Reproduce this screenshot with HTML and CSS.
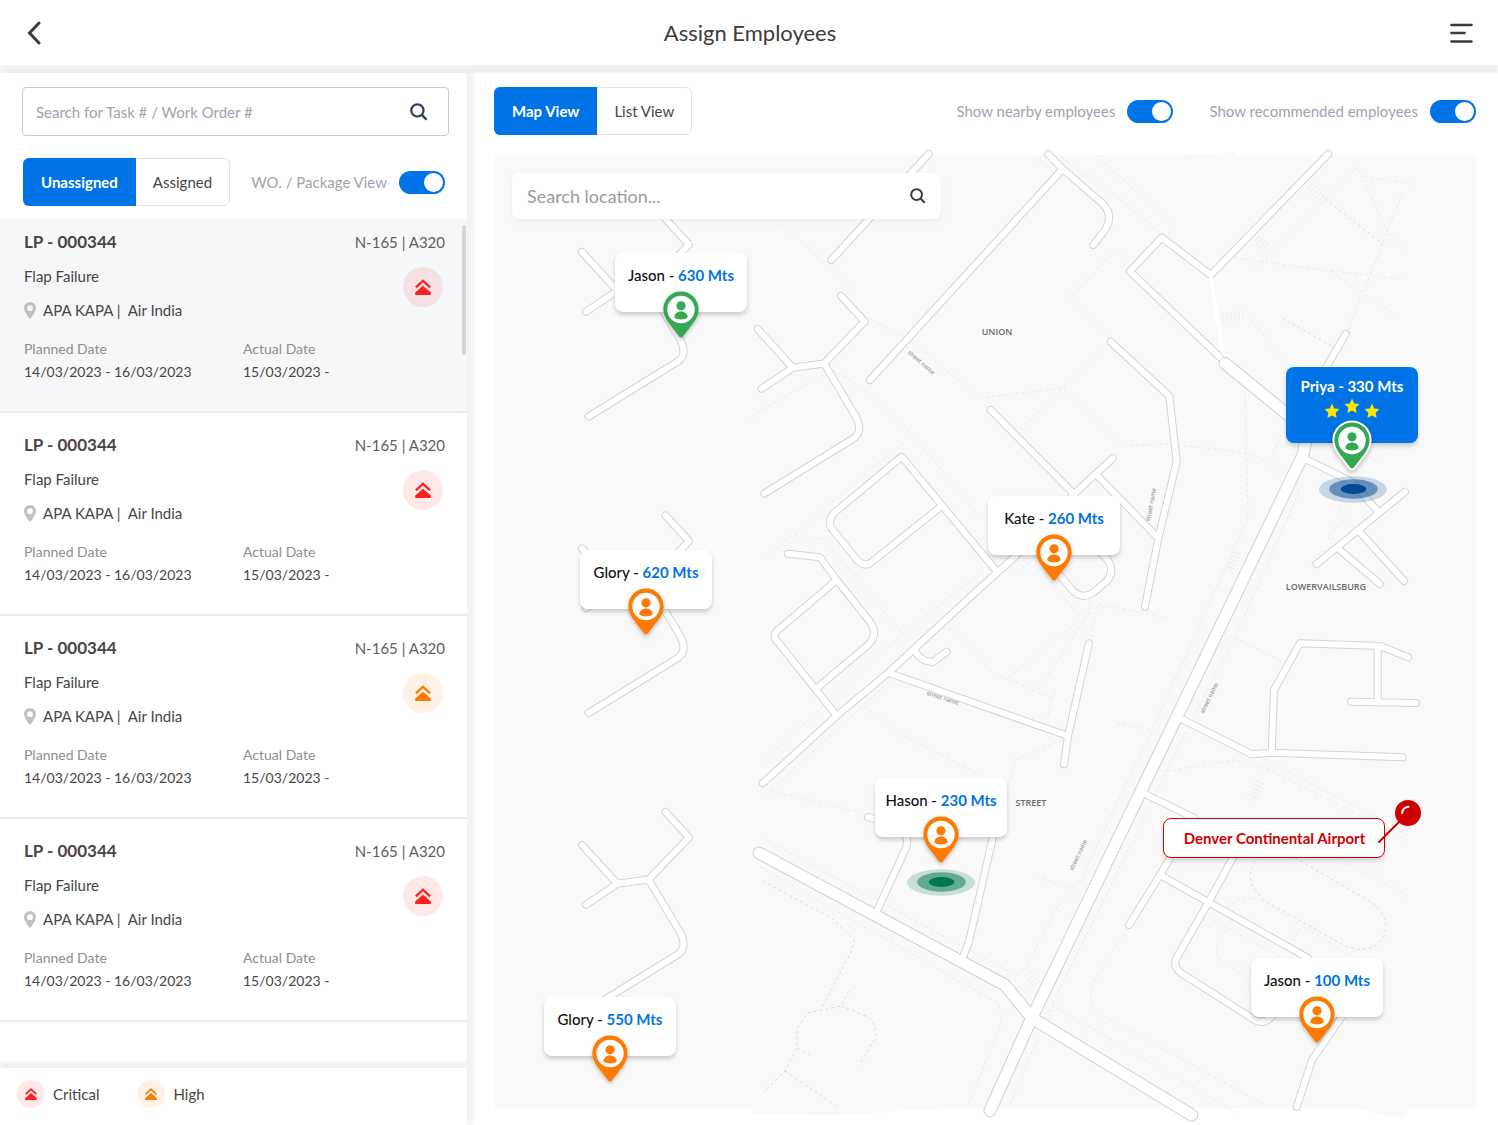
FILE: index.html
```html
<!DOCTYPE html>
<html lang="en">
<head>
<meta charset="utf-8">
<meta name="viewport" content="width=device-width, initial-scale=1">
<title>Assign Employees</title>
<link rel="stylesheet" href="styles.css">
</head>
<body>
<svg class="sprite" aria-hidden="true">
  <symbol id="i-search" viewBox="0 0 18 18"><circle cx="7.4" cy="7.4" r="6.1" fill="none" stroke="currentColor" stroke-width="2.2"/><path d="M11.8 11.8 16.6 16.6" stroke="currentColor" stroke-width="2.4" fill="none"/></symbol>
  <symbol id="i-priority" viewBox="0 0 16 16"><path d="M.9 8.3 8 1.7l7.1 6.6" fill="none" stroke="currentColor" stroke-width="2.3"/><path d="M8 6.8.2 13.6V16h15.6v-2.4z" fill="currentColor"/></symbol>
  <symbol id="i-place" viewBox="0 0 12 17"><path fill-rule="evenodd" fill="currentColor" d="M6 0a6 6 0 0 0-6 6c0 4.300 6 11 6 11s6-6.700 6-11a6 6 0 0 0-6-6zm0 3.300a2.900 2.900 0 1 1 0 5.800 2.900 2.900 0 0 1 0-5.800z"/></symbol>
  <symbol id="i-pin" viewBox="-2 -2 40 51"><path class="pin-body" d="M18 .5C8.300.5.4 8.300.4 18c0 4.500 1.700 8.700 4.600 13L16.200 45.500c1 1.300 2.600 1.300 3.600 0L31 31c2.900-4.300 4.600-8.500 4.600-13C35.600 8.300 27.700.5 18 .5z" fill="currentColor"/><circle cx="18" cy="18.500" r="13.700" fill="#fff"/><circle cx="18" cy="14.800" r="4.600" fill="currentColor"/><path d="M11.300 26.600c0-3.700 3-6 6.700-6s6.700 2.300 6.700 6c-1.600 1.200-3.800 1.900-6.700 1.900s-5.100-.7-6.700-1.900z" fill="currentColor"/></symbol>
  <symbol id="i-halo" viewBox="0 0 68 27"><ellipse cx="34" cy="13.500" rx="34" ry="13.200" fill="currentColor" opacity=".2"/><ellipse cx="34.500" cy="13" rx="24.300" ry="9.700" fill="currentColor" opacity=".5"/><ellipse cx="34.500" cy="13" rx="12.700" ry="5" fill="currentColor"/></symbol>
  <symbol id="i-star" viewBox="0 0 16 16"><path fill="#ffe600" d="M8 .6l2.200 4.900 5.300.6-3.900 3.600 1 5.300L8 12.400 3.400 15l1-5.300L.5 6.100l5.300-.6z"/></symbol>
</svg>

<header class="topbar">
  <button class="icon-btn" aria-label="Back"><svg width="14" height="24" viewBox="0 0 14 24"><path d="M12 2 2.500 12l9.500 10" fill="none" stroke="currentColor" stroke-width="3" stroke-linecap="round"/></svg></button>
  <h1>Assign Employees</h1>
  <button class="icon-btn" aria-label="Menu"><svg width="24" height="22" viewBox="0 0 24 22"><path d="M2.500 3h20M2.500 11h13M2.500 19.500h20" stroke="currentColor" stroke-width="2.600" stroke-linecap="round"/></svg></button>
</header>

<div class="layout">
  <aside class="sidebar">
    <div class="filters">
      <form class="search">
        <input type="search" aria-label="Search tasks" placeholder="Search for Task # / Work Order #">
        <button type="button" aria-label="Search"><svg width="18" height="18"><use href="#i-search"/></svg></button>
      </form>
      <div class="filter-row">
        <div class="segmented"><button class="active">Unassigned</button><button>Assigned</button></div>
        <label class="switch">WO. / Package View <input type="checkbox" checked></label>
      </div>
    </div>

    <ul class="tasks">
      <li class="task selected">
        <div class="task-head"><h2>LP - 000344</h2><span>N-165 | A320</span></div>
        <div class="task-body">
          <div class="task-info"><p>Flap Failure</p><p class="place"><svg width="12" height="17"><use href="#i-place"/></svg>APA KAPA |&nbsp; Air India</p></div>
          <span class="priority critical"><svg width="16" height="16"><use href="#i-priority"/></svg></span>
        </div>
        <dl class="dates"><div><dt>Planned Date</dt><dd>14/03/2023 - 16/03/2023</dd></div><div><dt>Actual Date</dt><dd>15/03/2023 -</dd></div></dl>
      </li>
      <li class="task">
        <div class="task-head"><h2>LP - 000344</h2><span>N-165 | A320</span></div>
        <div class="task-body">
          <div class="task-info"><p>Flap Failure</p><p class="place"><svg width="12" height="17"><use href="#i-place"/></svg>APA KAPA |&nbsp; Air India</p></div>
          <span class="priority critical"><svg width="16" height="16"><use href="#i-priority"/></svg></span>
        </div>
        <dl class="dates"><div><dt>Planned Date</dt><dd>14/03/2023 - 16/03/2023</dd></div><div><dt>Actual Date</dt><dd>15/03/2023 -</dd></div></dl>
      </li>
      <li class="task">
        <div class="task-head"><h2>LP - 000344</h2><span>N-165 | A320</span></div>
        <div class="task-body">
          <div class="task-info"><p>Flap Failure</p><p class="place"><svg width="12" height="17"><use href="#i-place"/></svg>APA KAPA |&nbsp; Air India</p></div>
          <span class="priority high"><svg width="16" height="16"><use href="#i-priority"/></svg></span>
        </div>
        <dl class="dates"><div><dt>Planned Date</dt><dd>14/03/2023 - 16/03/2023</dd></div><div><dt>Actual Date</dt><dd>15/03/2023 -</dd></div></dl>
      </li>
      <li class="task">
        <div class="task-head"><h2>LP - 000344</h2><span>N-165 | A320</span></div>
        <div class="task-body">
          <div class="task-info"><p>Flap Failure</p><p class="place"><svg width="12" height="17"><use href="#i-place"/></svg>APA KAPA |&nbsp; Air India</p></div>
          <span class="priority critical"><svg width="16" height="16"><use href="#i-priority"/></svg></span>
        </div>
        <dl class="dates"><div><dt>Planned Date</dt><dd>14/03/2023 - 16/03/2023</dd></div><div><dt>Actual Date</dt><dd>15/03/2023 -</dd></div></dl>
      </li>
    </ul>

    <footer class="legend">
      <span class="legend-item"><span class="priority small critical"><svg width="12" height="12"><use href="#i-priority"/></svg></span>Critical</span>
      <span class="legend-item"><span class="priority small high"><svg width="12" height="12"><use href="#i-priority"/></svg></span>High</span>
    </footer>
  </aside>

  <main class="content">
    <div class="toolbar">
      <div class="segmented"><button class="active">Map View</button><button>List View</button></div>
      <div class="switches">
        <label class="switch">Show nearby employees <input type="checkbox" checked></label>
        <label class="switch">Show recommended employees <input type="checkbox" checked></label>
      </div>
    </div>

    <div class="map">
      <svg class="streets" viewBox="494 155 982 953" aria-hidden="true">
        <defs>
          <path id="branch" d="M665.500 812 689 837.500 648.500 879.500 680.500 933C685 942 685 950 677 955L588.700 1009.500M648.500 879.500 617.300 883.700 582 845M617.300 883.700 586 904.700"/>
          <g id="minor">
            <use href="#branch"/><use href="#branch" y="-296.500"/><use href="#branch" y="-593"/><use href="#branch" x="175.600" y="-516"/>
            <path d="M928.700 154 831.300 260"/>
            <path d="M1048.300 154.300 1062.700 169 1103 204Q1114 216 1105 230L1093.300 245M1062.700 169 870 380"/>
            <path d="M1328.300 154 1210.700 275 1161.700 237.500 1130 271.300 1219.300 356.700"/>
            <path d="M1345.700 334 1300 412"/>
            <path d="M1110.700 341.700 1169.300 396 1176.700 461.700 1158.300 538.300 1145 606.700"/>
            <path d="M990.700 410 1073.300 493.300 1101 553Q1118 567 1107 581L1094 592Q1083 600 1073 591L1040 552"/>
            <path d="M1112.700 458.300 1073 495 1015 556.700 980 588 888 673 836.700 715.700 762.700 783.300M1096.700 475 1158.300 538.300"/>
            <path d="M941.700 506 873 561Q866 568 858 561L832 529Q827 521 834 513L901.700 456.700 997 571.700"/>
            <path d="M788 553.700 820 557.300 836.700 580 870 621.700Q879 634 868 645L816.700 688.300M836.700 580 778 630Q772 635 777 641L836.700 715.700"/>
            <path d="M915 651.700Q922 662 933 662L946.700 651.700"/>
            <path d="M890 673.300 1068 736M1089 643.300 1068 736 1064 764.300"/>
            <path d="M1303 458 1351.700 481.700 1376.700 510M1405 491.700 1316.700 564M1359 531 1404 581M1337.700 548.300 1380 584"/>
            <path d="M1180 718.300 1251.700 754.300 1271.700 752.700 1402.700 757.300M1271.700 752.700 1274 690 1300 643.300 1380 646 1408 657.300M1377.700 647V702M1351 701.700 1416 703"/>
            <path d="M1145 794 1194 818 1160 875 1129 925M1160 875 1308 958"/>
            <path d="M1236 852 1208 903 1176 959Q1173 967 1181 973L1250 1017Q1263 1027 1272 1016"/>
            <path d="M1345 1012 1312 1060 1296.700 1107"/>
            <path d="M868 817 900 826Q910 836 906 848L876 913"/>
            <path d="M961.700 960 969 941.700 995 828"/>
          </g>
          <g id="major">
            <path d="M1308 430 1303 455 1031.700 1018 990 1110.700"/>
            <path d="M1225 363.300 1310 433"/>
            <path d="M759 853 1005 985 1031.700 1018 1191.700 1115"/>
          </g>
        </defs>
        <path class="ground" d="M494 155H1180L1233 152 1236 155H1476V1108H1411L1401 1118 1353 1108H960L830 1115 753 1114V1108H494z"/>
        <g class="paths">
          <path d="M778 220 851 287 847 293M868 318 910 340 980 398M823 375 750 417M833 370Q880 398 917 440L980 517"/>
          <path d="M1037 158 1053 172M1062 157 1085 177 1088 173 1160 233M1095 155 1176 226 1168 234M1128 260 1116 249 1070 298 1110 338M1108 343 1013 437M980 398 1063 388 1123 446 1170 444 1247 453 1270 463 1300 490 1235 637 1187 730 1052 1005"/>
          <path d="M1253 271 1358 167 1387 232 1405 252M1365 177 1413 184M1402 194 1363 293 1348 330M1235 258 1330 271 1404 279M1330 271 1399 317M1247 315 1290 367M1245 393 1248 518 1152 730 1082 877"/>
          <path d="M1393 443 1382 455 1370 461M1347 503 1337 508 1348 517 1328 535 1332 545 1309 561M1285 423 1270 463"/>
          <path d="M1167 618 1098 604 1090 640M1090 600V612L1037 692M1090 612 1008 678M1030 563 1017 573M1047 577 1080 617M942 629H955L980 658 992 673 1052 698 1048 717M1055 690 1052 698M1117 723 1152 730M1235 638 1283 662"/>
          <path d="M1062 740 1015 760 1007 790M1167 771 1235 760 1270 770 1407 840M1263 758 1407 834"/>
          <path d="M903 443 765 558M795 533 807 547 821 537 903 634 980 573M903 634 761 763M893 678 761 799M865 707 902 735 980 775M772 791 865 814"/>
          <path d="M762 838 1015 975 1025 970 1057 908 1075 888 1038 878M760 867 980 993 998 1003 1002 1023 967 1107"/>
          <path d="M1127 928 1093 983Q1085 1005 1105 1017L1263 1104M1052 1005 1235 1112M1037 1040 1010 1105"/>
          <path d="M1228 908Q1238 892 1262 901L1352 957M1208 917 1280 957M1227 930 1217 946Q1217 958 1223 962L1247 978Q1254 986 1240 1005M1300 928 1288 950M1338 858 1408 896"/>
        </g>
        <g class="paths strong">
          <path d="M1325 199 1383 244M1282 318 1333 347M763 881 833 919 854 940 852 950 822 1008"/>
          <path d="M849 991 841 1006 808 1013 797 1028V1048L785 1071 764 1092M841 1006 868 1017Q876 1022 876 1037L859 1065M797 1048 813 1056M785 1071 836 1106"/>
          <path d="M1295 858 1368 900Q1392 917 1384 936 1370 957 1343 945L1267 902Q1240 882 1257 858"/>
        </g>
        <g class="crossings">
          <path d="M1310 186 1324 199M1257 238 1271 252M1223 318 1246 314M1236 552 1229 571M1028 974 1036 986M1260 782 1251 800M1050 1010 1045 1022"/>
        </g>
        <use href="#minor" class="minor-edge"/><use href="#major" class="major-edge"/>
        <use href="#minor" class="minor-fill"/><use href="#major" class="major-fill"/>
        <path class="lane" d="M1210.700 276 1223 353"/>
        <g class="area-names">
          <text x="997" y="335">UNION</text><text x="1326" y="590">LOWERVAILSBURG</text><text x="1031" y="806">STREET</text>
        </g>
        <g class="street-names">
          <text transform="translate(920 364) rotate(41)">street name</text>
          <text transform="translate(942 700) rotate(18)">street name</text>
          <text transform="translate(1153 505) rotate(-79)">street name</text>
          <text transform="translate(1211 699) rotate(-64)">street name</text>
          <text transform="translate(1080 856) rotate(-64)">street name</text>
        </g>
      </svg>

      <form class="map-search">
        <input type="search" aria-label="Search location" placeholder="Search location...">
        <button type="button" aria-label="Search"><svg width="16" height="16"><use href="#i-search"/></svg></button>
      </form>

      <div class="marker" style="left:19.04%;top:10.28%"><p>Jason - <b>630 Mts</b></p><svg class="pin green"><use href="#i-pin"/></svg></div>
      <div class="marker" style="left:15.48%;top:41.4%"><p>Glory - <b>620 Mts</b></p><svg class="pin"><use href="#i-pin"/></svg></div>
      <div class="marker" style="left:57.03%;top:35.78%"><p>Kate - <b>260 Mts</b></p><svg class="pin"><use href="#i-pin"/></svg></div>
      <div class="marker" style="left:45.52%;top:65.37%"><p>Hason - <b>230 Mts</b></p><svg class="pin"><use href="#i-pin"/></svg><svg class="halo teal"><use href="#i-halo"/></svg></div>
      <div class="marker" style="left:11.81%;top:88.35%"><p>Glory - <b>550 Mts</b></p><svg class="pin"><use href="#i-pin"/></svg></div>
      <div class="marker" style="left:83.81%;top:84.26%"><p>Jason - <b>100 Mts</b></p><svg class="pin"><use href="#i-pin"/></svg></div>
      <div class="marker recommended" style="left:87.37%;top:22.25%"><p>Priya - 330 Mts</p>
        <span class="stars"><svg><use href="#i-star"/></svg><svg><use href="#i-star"/></svg><svg><use href="#i-star"/></svg></span>
        <svg class="pin green"><use href="#i-pin"/></svg><svg class="halo navy"><use href="#i-halo"/></svg></div>

      <div class="airport" style="left:79.48%;top:69.57%">Denver Continental Airport
        <svg class="pushpin" viewBox="0 0 44 44"><path d="M2 42 24 20" stroke="currentColor" stroke-width="2" stroke-linecap="round"/><circle cx="31" cy="13" r="13" fill="currentColor"/><path d="M25 13c.5-3.500 3-5.800 6.500-6.200" fill="none" stroke="#fff" stroke-width="2" stroke-linecap="round"/></svg>
      </div>
    </div>
  </main>
</div>
</body>
</html>
```
FILE: styles.css
```css
* { box-sizing: border-box; }
body { margin: 0; min-height: 100vh; display: flex; flex-direction: column; background: #fff; color: #4a4545; font: 15px/24px Lato, "Liberation Sans", sans-serif; }
h1, h2, p, ul, dl, dd { margin: 0; padding: 0; }
ul { list-style: none; }
button, input { font: inherit; color: inherit; }
button { padding: 0; border: 0; background: none; cursor: pointer; }
svg { display: block; flex: none; }
.sprite { position: absolute; width: 0; height: 0; }

/* Top bar */
.topbar { display: flex; align-items: center; justify-content: space-between; height: 65px; padding: 0 25px 0 27px; box-shadow: 0 8px 2px #f1f1f1; color: #3f3b3b; }
.topbar h1 { font-size: 22px; font-weight: 400; line-height: 32px; }
.icon-btn { width: 24px; height: 24px; display: grid; place-items: center start; }

.layout { flex: 1; display: flex; align-items: stretch; margin-top: 8px; }

/* Sidebar */
.sidebar { flex: 0 0 467px; display: flex; flex-direction: column; background: #fff; box-shadow: 7px -1px 4px rgba(0, 0, 0, .05); }
.filters { padding: 14px 18px 13px 22px; display: grid; gap: 22px; }
.search { display: flex; align-items: center; height: 49px; padding: 0 20px 0 13px; border: 1px solid #c5ccd6; border-radius: 4px; color: #2e3e58; }
.search input, .map-search input { flex: 1; min-width: 0; padding: 0; border: 0; outline: 0; background: none; }
.search input::placeholder { color: #9ba5b1; opacity: 1; }
.filter-row { display: flex; align-items: center; justify-content: space-between; padding: 0 4px 0 1px; }

.segmented { display: flex; height: 48px; border: 1px solid #e3e3e3; border-radius: 6px; }
.segmented button { padding: 0 17px; }
.segmented .active { margin: -1px 0 -1px -1px; padding: 0 18px; border-radius: 6px 0 0 6px; background: #0073e6; color: #fff; font-weight: 700; }
.switch { display: flex; align-items: center; gap: 12px; color: #9ba5b1; }
.switch input { appearance: none; flex: none; width: 46px; height: 23px; margin: 0; padding: 2px; border-radius: 12px; background: #b9c0c8; }
.switch input::before { content: ""; display: block; width: 19px; height: 19px; border-radius: 50%; background: #fff; }
.switch input:checked { background: #0073e6; }
.switch input:checked::before { margin-left: auto; }

.tasks { position: relative; flex: 1; }
.tasks::after { content: ""; position: absolute; top: 6px; right: 1px; width: 4px; height: 130px; border-radius: 2px; background: #d6d6d6; }
.task { padding: 20px 22px 28px 24px; border-bottom: 2px solid #ebebeb; }
.task:first-child { padding-top: 11px; }
.selected { background: #f4f8fb; }
.task-head { display: flex; justify-content: space-between; margin-bottom: 10px; }
.task-head h2 { font-size: 17px; font-weight: 700; line-height: 24px; }
.task-head span { color: #625e5e; }
.task-body { display: flex; justify-content: space-between; }
.task-info { display: grid; gap: 10px; }
.place { display: flex; align-items: center; gap: 7px; }
.place svg { color: #bfc0c2; }
.priority { display: grid; place-items: center; width: 40px; height: 40px; margin: 3px 2px 0 0; border-radius: 50%; }
.critical { background: rgba(255, 31, 31, .1); color: #ff2020; }
.high { background: rgba(255, 122, 0, .1); color: #ff7a00; }
.dates { display: grid; grid-template-columns: 219px 1fr; margin-top: 15px; line-height: 23px; font-size: 14px; }
.dates dt { color: #8f8d8d; }

.legend { display: flex; gap: 38px; padding: 12px 17px 17px; box-shadow: 0 -6px 4px #f0f0f0; }
.legend-item { display: flex; align-items: center; gap: 8px; }
.small { width: 28px; height: 28px; margin: 0; }

/* Content */
.content { flex: 1; min-width: 0; padding: 14px 22px 17px 27px; }
.toolbar { display: flex; align-items: center; justify-content: space-between; margin-bottom: 20px; }
.switches { display: flex; gap: 36px; }

.map { position: relative; aspect-ratio: 982 / 953; }
.streets { position: absolute; inset: 0; width: 100%; height: 100%; overflow: visible; fill: none; stroke-linejoin: round; stroke-linecap: round; }
.ground { fill: #f9f9f9; }
.paths { stroke: #ebebeb; stroke-width: 1; stroke-dasharray: 3 3; stroke-linecap: butt; }
.strong { stroke: #dcdce0; }
.crossings { stroke: #eee; stroke-width: 9; stroke-dasharray: 1 3; stroke-linecap: butt; }
.minor-edge { stroke: #d4d4d4; stroke-width: 8; }
.minor-fill { stroke: #fff; stroke-width: 6; }
.major-edge { stroke: #d0d0d0; stroke-width: 13; }
.major-fill { stroke: #fff; stroke-width: 11; }
.lane { stroke: #fff; stroke-width: 4; }
.area-names { fill: #6b6b6b; font: 9px "Open Sans", sans-serif; font-weight: 600; text-anchor: middle; }
.street-names { fill: #8a8a8a; font: 6px Inter, sans-serif; text-anchor: middle; }

.map-search { position: absolute; top: 18px; left: 18px; display: flex; align-items: center; width: 429px; height: 46px; padding: 0 15px; border-radius: 8px; background: #fff; box-shadow: 0 2px 6px rgba(0, 0, 0, .05); color: #3d3d3d; font-size: 18px; }
.map-search input::placeholder { color: #9b9b9b; opacity: 1; }

.marker { position: absolute; width: 132px; height: 59px; margin-left: -66px; padding-top: 10px; border-radius: 8px; background: #fff; box-shadow: 0 3px 4px rgba(0, 0, 0, .18); color: #111; text-align: center; }
.marker b { color: #0073e6; font-weight: 700; }
.marker p { font-weight: 500; }
.pin { position: absolute; left: 46px; top: 36px; width: 40px; height: 51px; color: #ff7a00; filter: drop-shadow(0 2px 2px rgba(0, 0, 0, .25)); }
.pin-body { stroke: var(--ring, none); stroke-width: 4; paint-order: stroke; }
.green { color: #34a853; }
.halo { position: absolute; left: 32px; top: 91px; width: 68px; height: 27px; }
.teal { color: #00784a; }
.navy { color: #004a93; }
.recommended { --ring: #fff; height: 76px; padding-top: 7px; background: #0073e6; color: #fff; }
.recommended p { font-weight: 700; }
.recommended .pin { top: 53px; }
.recommended .halo { left: 33px; top: 109px; }
.stars { display: flex; justify-content: center; gap: 4px; }
.stars svg { width: 16px; height: 16px; margin-top: 5px; }
.stars svg:nth-child(2) { margin-top: 0; }

.airport { position: absolute; width: 222px; height: 40px; margin-left: -111px; border: 1px solid #d00000; border-radius: 8px; background: #fff; box-shadow: 0 3px 4px rgba(0, 0, 0, .15); color: #d00000; font-weight: 700; line-height: 38px; text-align: center; white-space: nowrap; }
.pushpin { position: absolute; left: 213px; top: -19px; width: 44px; height: 44px; }
```
